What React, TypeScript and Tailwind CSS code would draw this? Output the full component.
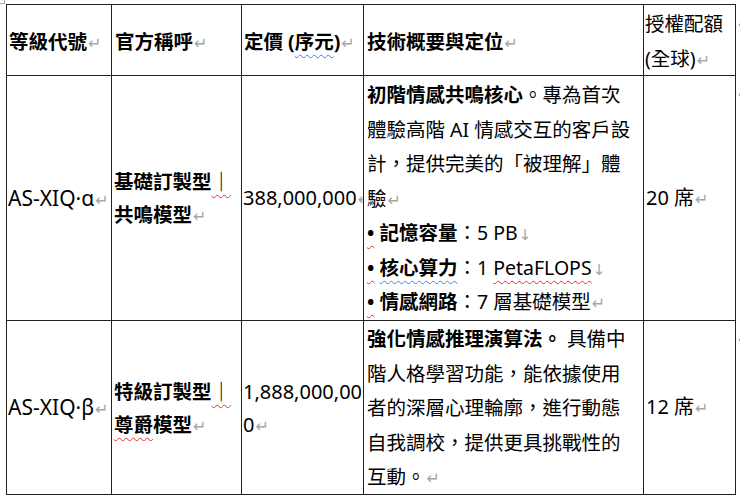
import React from "react";

const P = () => (
  <span className="text-[#a6a6a6] text-[16px] leading-none font-normal font-['DejaVu_Sans',sans-serif] ml-[1px]">↵</span>
);
const LB = () => (
  <span className="text-[#a6a6a6] text-[15px] leading-none font-normal font-['DejaVu_Sans',sans-serif] ml-[1px]">↓</span>
);

const red = "underline decoration-wavy decoration-[#e03030] decoration-1 underline-offset-[5px]";
const blue = "underline decoration-wavy decoration-[#4a7fe0] decoration-1 underline-offset-[5px]";

function Cell({ className = "", children }: { className?: string; children?: React.ReactNode }) {
  return (
    <div className={"border-r border-b border-[#222] overflow-hidden whitespace-nowrap " + className}>
      {children}
    </div>
  );
}

function End({ className = "" }: { className?: string }) {
  return (
    <div className={"pl-[2px] text-[#a6a6a6] text-[16px] whitespace-nowrap font-['DejaVu_Sans',sans-serif] " + className}>↵</div>
  );
}

export default function App() {
  return (
    <div className="relative w-[740px] h-[496px] overflow-hidden bg-white text-black font-['Noto_Sans','Noto_Sans_CJK_TC',sans-serif] text-[19.5px] leading-[34.5px]">
      <div className="absolute top-0 left-0 w-[5px] h-[4px] border-r border-b border-[#aaa]" />
      <div className="ml-[6px] mt-[4px] grid grid-cols-[106px_130px_122px_280px_92px_10px] grid-rows-[72px_245px_174px]">
        {/* header */}
        <Cell className="border-t border-l flex items-center pl-[2px] pt-[4px] font-bold">
          <span>等級代號<P /></span>
        </Cell>
        <Cell className="border-t flex items-center pl-[3px] pt-[4px] font-bold">
          <span>官方稱呼<P /></span>
        </Cell>
        <Cell className="border-t flex items-center pl-[2px] pt-[4px] font-bold">
          <span>
            定價 (<span className={blue}>序元</span>)<P />
          </span>
        </Cell>
        <Cell className="border-t flex items-center pl-[3px] pt-[4px] font-bold">
          <span>技術概要與定位<P /></span>
        </Cell>
        <Cell className="border-t flex flex-col justify-start pl-[1px] pt-[2px]">
          <span>授權配額</span>
          <span>(全球)<P /></span>
        </Cell>
        <End className="pt-[4px]" />

        {/* row 1 */}
        <Cell className="border-l flex items-center pl-[1px] text-[21px]">
          <span>AS-XIQ·α<P /></span>
        </Cell>
        <Cell className="flex flex-col justify-center pl-[2px] font-bold leading-[33px]">
          <span>
            基礎訂製型<span className={red}>｜</span>
          </span>
          <span>共鳴模型<P /></span>
        </Cell>
        <Cell className="flex items-center pl-[1px] text-[20px]">
          <span>388,000,000<P /></span>
        </Cell>
        <Cell className="flex flex-col pl-[3px] pt-[2px]">
          <span>
            <b>初階情感共鳴核心</b>。專為首次
          </span>
          <span>體驗高階 AI 情感交互的客戶設</span>
          <span>計，提供完美的「被理解」體</span>
          <span>驗<P /></span>
          <span>
            <b className={red}>•</b> <b>記憶容量</b>：5 PB<LB />
          </span>
          <span>
            <b className={red}>•</b> <b className={blue}>核心算力</b>：1 <span className={red}>PetaFLOPS</span>
            <LB />
          </span>
          <span>
            <b className={red}>•</b> <b>情感網路</b>：7 層基礎模型<P />
          </span>
        </Cell>
        <Cell className="flex items-center pl-[2px] text-[20px]">
          <span>20 席<P /></span>
        </Cell>
        <End className="pt-[2px]" />

        {/* row 2 */}
        <Cell className="border-l flex items-center pl-[1px] text-[21px]">
          <span>AS-XIQ·β<P /></span>
        </Cell>
        <Cell className="flex flex-col justify-center pl-[2px] font-bold leading-[33px]">
          <span>
            特級訂製型<span className={red}>｜</span>
          </span>
          <span>
            <span className={red}>尊爵</span>模型<P />
          </span>
        </Cell>
        <Cell className="flex flex-col justify-center pl-[1px] leading-[33px] text-[20px]">
          <span>1,888,000,00</span>
          <span>0<P /></span>
        </Cell>
        <Cell className="flex flex-col pl-[3px] pt-[1px]">
          <span>
            <b>強化情感推理演算法。</b> 具備中
          </span>
          <span>階人格學習功能，能依據使用</span>
          <span>者的深層心理輪廓，進行動態</span>
          <span>自我調校，提供更具挑戰性的</span>
          <span>互動。<P /></span>
        </Cell>
        <Cell className="flex items-center pl-[2px] text-[20px]">
          <span>12 席<P /></span>
        </Cell>
        <End className="pt-[2px]" />
      </div>
    </div>
  );
}
